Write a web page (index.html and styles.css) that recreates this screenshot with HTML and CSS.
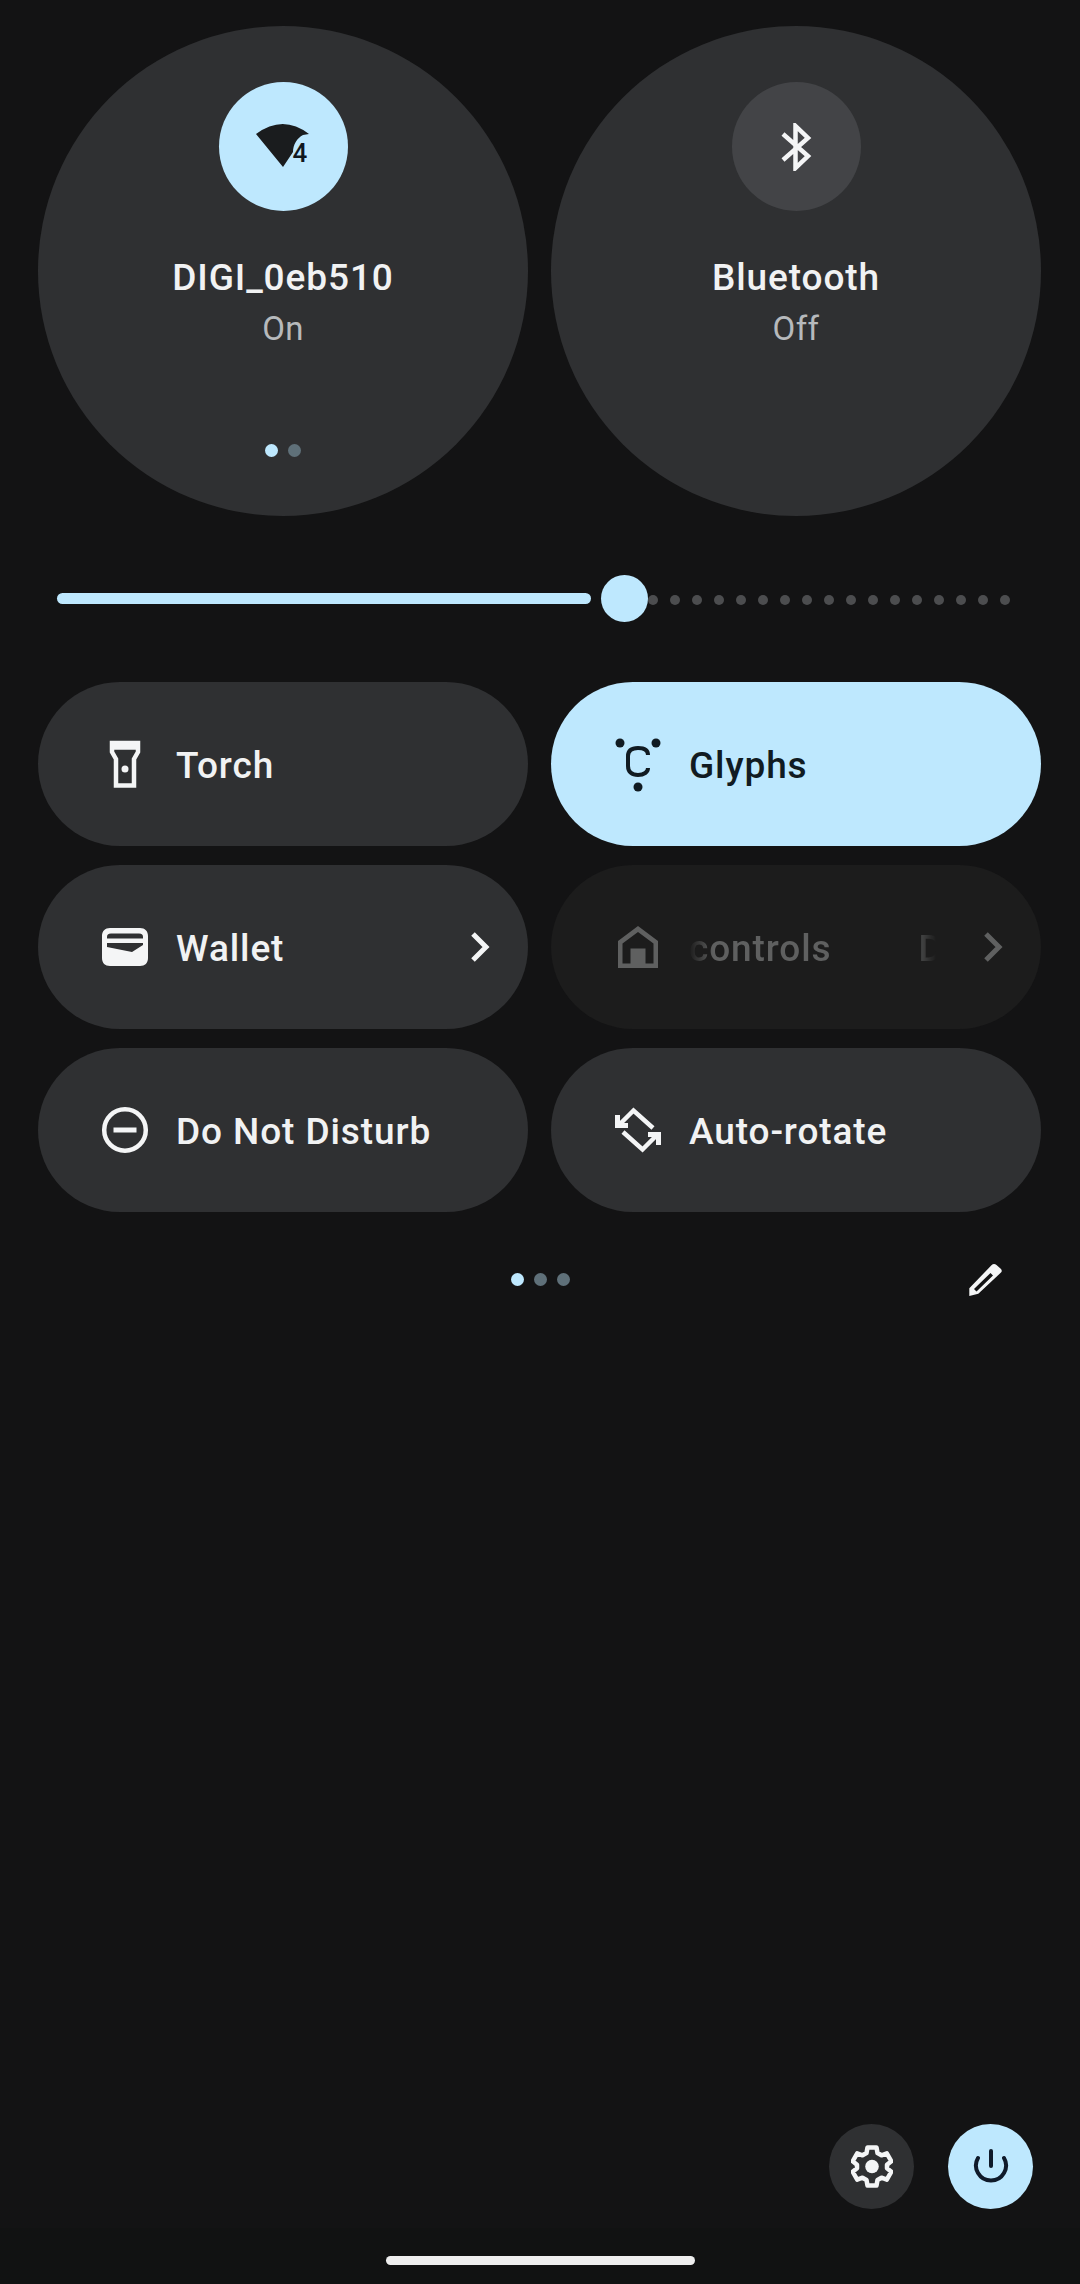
FILE: index.html
```html
<!DOCTYPE html>
<html lang="en">
<head>
    <meta charset="UTF-8">
    <meta name="viewport" content="width=device-width, initial-scale=1.0">
    <title>Quick Settings</title>
    <link rel="stylesheet" href="styles.css">
</head>
<body>
    <div class="big-row">
        <div class="big-tile">
            <div class="big-icon big-icon-on">
                <svg width="129" height="129" viewBox="0 0 129 129">
                    <path class="wifi-wedge" d="M37 52 Q64 32 90 52 L84 53 C78 56 74 63 74 70 L64 85 Z"/>
                </svg>
                <span class="wifi-num">4</span>
            </div>
            <div class="big-title">DIGI_0eb510</div>
            <div class="big-sub">On</div>
            <div class="dots big-dots">
                <span class="dot dot-on"></span>
                <span class="dot"></span>
            </div>
        </div>
        <div class="big-tile">
            <div class="big-icon">
                <svg width="32" height="48" viewBox="0 0 32 48">
                    <path class="line-white" d="M3 11 L28 33 L15.500 45 L15.500 3 L28 15 L3 37"/>
                </svg>
            </div>
            <div class="big-title">Bluetooth</div>
            <div class="big-sub">Off</div>
        </div>
    </div>

    <div class="slider">
        <div class="slider-fill"></div>
        <div class="slider-thumb"></div>
        <div class="slider-dots">
            <i></i><i></i><i></i><i></i><i></i><i></i><i></i><i></i><i></i>
            <i></i><i></i><i></i><i></i><i></i><i></i><i></i><i></i>
        </div>
    </div>

    <div class="tile-grid">
        <div class="tile">
            <span class="tile-icon">
                <svg width="46" height="46" viewBox="0 0 46 46">
                    <path class="line-white" d="M10 2 H36 V11 L32 18 V44.500 H14 V18 L10 11 Z M10 6.500 H36"/>
                    <circle class="fill-white" cx="23" cy="28" r="3.500"/>
                </svg>
            </span>
            <span class="tile-label">Torch</span>
        </div>
        <div class="tile tile-on">
            <span class="tile-icon">
                <svg width="46" height="46" viewBox="0 0 46 46">
                    <circle class="fill-dark" cx="5" cy="2" r="4.500"/>
                    <circle class="fill-dark" cx="41" cy="2" r="4.500"/>
                    <circle class="fill-dark" cx="23" cy="46" r="4.500"/>
                    <path class="line-dark" d="M33 14 C33 9 29 7 23 7 C16 7 13 10 13 15 V25 C13 31 17 34 23 34 C29 34 33 31 33 27"/>
                </svg>
            </span>
            <span class="tile-label">Glyphs</span>
        </div>
        <div class="tile">
            <span class="tile-icon">
                <svg width="46" height="38" viewBox="0 0 46 38">
                    <path class="fill-white" fill-rule="evenodd" d="M8 0 H38 C43 0 46 3 46 8 V30 C46 35 43 38 38 38 H8 C3 38 0 35 0 30 V8 C0 3 3 0 8 0 Z M5 10.500 V9 C5 7 6 5.500 9 5.500 H37 C40 5.500 41 7 41 9 V10.500 Z M5 15 H41 V17 L30 24 L5 19 Z"/>
                </svg>
            </span>
            <span class="tile-label">Wallet</span>
            <svg class="tile-chevron" width="20" height="30" viewBox="0 0 20 30">
                <path class="line-white chevron-line" d="M3 2 L16 15 L3 28"/>
            </svg>
        </div>
        <div class="tile tile-off">
            <span class="tile-icon">
                <svg width="40" height="42" viewBox="0 0 40 42">
                    <path class="fill-grey" fill-rule="evenodd" d="M20 0 L40 15 V42 H0 V15 Z M20 6 L4.500 17.500 V37.500 H12.500 V22.500 H27.500 V37.500 H35.500 V17.500 Z"/>
                </svg>
            </span>
            <span class="tile-label marquee">
                <span>controls</span>
                <span>D</span>
            </span>
            <svg class="tile-chevron" width="20" height="30" viewBox="0 0 20 30">
                <path class="line-grey chevron-line" d="M3 2 L16 15 L3 28"/>
            </svg>
        </div>
        <div class="tile">
            <span class="tile-icon">
                <svg width="46" height="46" viewBox="0 0 46 46">
                    <circle class="line-white" cx="23" cy="23" r="20.800"/>
                    <rect class="fill-white" x="11.500" y="20.500" width="23" height="5"/>
                </svg>
            </span>
            <span class="tile-label">Do Not Disturb</span>
        </div>
        <div class="tile">
            <span class="tile-icon">
                <svg width="46" height="46" viewBox="0 0 46 46">
                    <path class="line-white" d="M3 19 L18.500 3.500 L38 21"/>
                    <path class="line-white" d="M43 27 L27.500 42.500 L8 25"/>
                    <path class="arrow-head" d="M2.500 8 V18.500 H13"/>
                    <path class="arrow-head" d="M43.500 38 V27.500 H33"/>
                </svg>
            </span>
            <span class="tile-label">Auto-rotate</span>
        </div>
    </div>

    <div class="pager">
        <div class="dots">
            <span class="dot dot-on"></span>
            <span class="dot"></span>
            <span class="dot"></span>
        </div>
        <svg class="pencil" width="34" height="36" viewBox="0 0 34 36">
            <path class="fill-white" fill-rule="evenodd" d="M0.300 33 V25.300 L22.700 2 C24 0.700 26 0.700 27.500 2 L32 6 C33 7.500 33 8.500 32 9.500 L9.300 30.700 Z M5 26 L21.500 10 L24 12.500 L7.500 28.500 Z"/>
        </svg>
    </div>

    <div class="spacer"></div>

    <div class="bottom-btns">
        <div class="round-btn">
            <svg width="42" height="43" viewBox="0 0 42 43">
                <path class="gear" d="M16.500 2.500 H25.500 L26.500 8 L30.500 10.300 L35.800 8.400 L40.300 16.200 L36 19.700 V23.300 L40.300 26.800 L35.800 34.600 L30.500 32.700 L26.500 35 L25.500 40.500 H16.500 L15.500 35 L11.500 32.700 L6.200 34.600 L1.700 26.800 L6 23.300 V19.700 L1.700 16.200 L6.200 8.400 L11.500 10.300 L15.500 8 Z"/>
                <circle class="fill-white" cx="21" cy="21.500" r="6.800"/>
            </svg>
        </div>
        <div class="round-btn round-btn-on">
            <svg width="36" height="36" viewBox="0 0 36 36">
                <path class="line-power" d="M18 2 V17"/>
                <path class="line-power" d="M5 9 A15 15 0 1 0 31 9"/>
            </svg>
        </div>
    </div>

    <div class="nav-bar">
        <div class="home-pill"></div>
    </div>
</body>
</html>
```

FILE: styles.css
```css
* {
    box-sizing: border-box;
}

body {
    font-family: 'Roboto', sans-serif;
    background-color: #131314;
    color: #f1f2f3;
    margin: 0;
    padding: 0;
    width: 1080px;
    height: 2284px;
    display: flex;
    flex-direction: column;
    overflow: hidden;
}

/* big round tiles */
.big-row {
    display: flex;
    gap: 23px;
    padding: 26px 39px 0 38px;
}

.big-tile {
    width: 490px;
    height: 490px;
    border-radius: 50%;
    background-color: #2f3032;
    display: flex;
    flex-direction: column;
    align-items: center;
    padding-top: 56px;
}

.big-icon {
    position: relative;
    width: 129px;
    height: 129px;
    border-radius: 50%;
    background-color: #434447;
    display: flex;
    align-items: center;
    justify-content: center;
}

.big-icon-on {
    background-color: #bee8fe;
}

.wifi-num {
    position: absolute;
    left: 74px;
    top: 56px;
    font-size: 26px;
    font-weight: 500;
    line-height: 30px;
    color: #10181e;
}

.big-title {
    margin-top: 42px;
    font-size: 37px;
    font-weight: 500;
    letter-spacing: 0.9px;
    line-height: 50px;
}

.big-sub {
    margin-top: 6px;
    font-size: 33px;
    letter-spacing: 0.4px;
    line-height: 40px;
    color: #b6b9bc;
}

.dots {
    display: flex;
    gap: 10px;
}

.big-dots {
    margin-top: 95px;
}

.dot {
    width: 13px;
    height: 13px;
    border-radius: 50%;
    background-color: #5f7079;
}

.dot-on {
    background-color: #bee8fe;
}

/* brightness slider */
.slider {
    display: flex;
    align-items: center;
    height: 47px;
    margin-top: 59px;
    padding-left: 57px;
}

.slider-fill {
    width: 534px;
    height: 11px;
    border-radius: 6px;
    background-color: #bee8fe;
}

.slider-thumb {
    width: 47px;
    height: 47px;
    margin-left: 10px;
    border-radius: 50%;
    background-color: #bee8fe;
}

.slider-dots {
    display: flex;
    gap: 12px;
    margin-top: 2px;
}

.slider-dots i {
    width: 10px;
    height: 10px;
    border-radius: 50%;
    background-color: #4c4d4f;
}

/* tile grid */
.tile-grid {
    display: grid;
    grid-template-columns: 490px 490px;
    grid-auto-rows: 164px;
    column-gap: 23px;
    row-gap: 19px;
    margin-top: 60px;
    padding-left: 38px;
}

.tile {
    display: flex;
    align-items: center;
    border-radius: 82px;
    background-color: #2f3032;
    padding-left: 64px;
    padding-right: 38px;
    font-size: 37px;
    font-weight: 500;
    letter-spacing: 0.9px;
}

.tile-icon {
    width: 46px;
    height: 46px;
    display: flex;
    align-items: center;
    justify-content: center;
    flex: none;
}

.tile-icon svg {
    overflow: visible;
}

.tile-label {
    margin-left: 28px;
    margin-top: 3px;
    flex: 1;
    white-space: nowrap;
}

.tile-on {
    background-color: #bee8fe;
    color: #111b22;
}

.tile-off {
    background-color: #1c1c1c;
    color: #5f6060;
}

.marquee {
    display: flex;
    gap: 87px;
    flex: none;
    width: 247px;
    -webkit-mask-image: linear-gradient(to right, transparent 0, #000 24px, #000 222px, transparent 247px);
    mask-image: linear-gradient(to right, transparent 0, #000 24px, #000 222px, transparent 247px);
}

.tile-chevron {
    flex: none;
}

.tile-off .tile-chevron {
    margin-left: auto;
}

/* pager row */
.pager {
    position: relative;
    display: flex;
    justify-content: center;
    margin-top: 61px;
    height: 13px;
}

.pencil {
    position: absolute;
    left: 969px;
    top: -10px;
}

.spacer {
    flex: 1;
}

/* bottom buttons */
.bottom-btns {
    display: flex;
    justify-content: flex-end;
    gap: 34px;
    padding-right: 47px;
    margin-bottom: 19px;
}

.round-btn {
    width: 85px;
    height: 85px;
    border-radius: 50%;
    background-color: #2f3032;
    display: flex;
    align-items: center;
    justify-content: center;
}

.round-btn-on {
    background-color: #bee8fe;
}

.nav-bar {
    display: flex;
    align-items: flex-start;
    justify-content: center;
    height: 56px;
    padding-top: 28px;
    background-color: #111212;
}

.home-pill {
    width: 309px;
    height: 9px;
    border-radius: 5px;
    background-color: #eeeeee;
}

/* svg paints */
.wifi-wedge {
    fill: #1a1c1e;
}

.line-white {
    fill: none;
    stroke: #f4f5f6;
    stroke-width: 4.500;
}

.line-dark {
    fill: none;
    stroke: #111b22;
    stroke-width: 4;
}

.line-grey {
    fill: none;
    stroke: #5f6060;
    stroke-width: 4.500;
}

.chevron-line {
    stroke-width: 5;
}

.arrow-head {
    fill: none;
    stroke: #f4f5f6;
    stroke-width: 5;
}

.line-power {
    fill: none;
    stroke: #0f1a2a;
    stroke-width: 4;
    stroke-linecap: round;
}

.fill-white {
    fill: #f4f5f6;
}

.fill-dark {
    fill: #111b22;
}

.fill-grey {
    fill: #5f6060;
}

.gear {
    fill: none;
    stroke: #f4f5f6;
    stroke-width: 4.500;
    stroke-linejoin: round;
}
```
